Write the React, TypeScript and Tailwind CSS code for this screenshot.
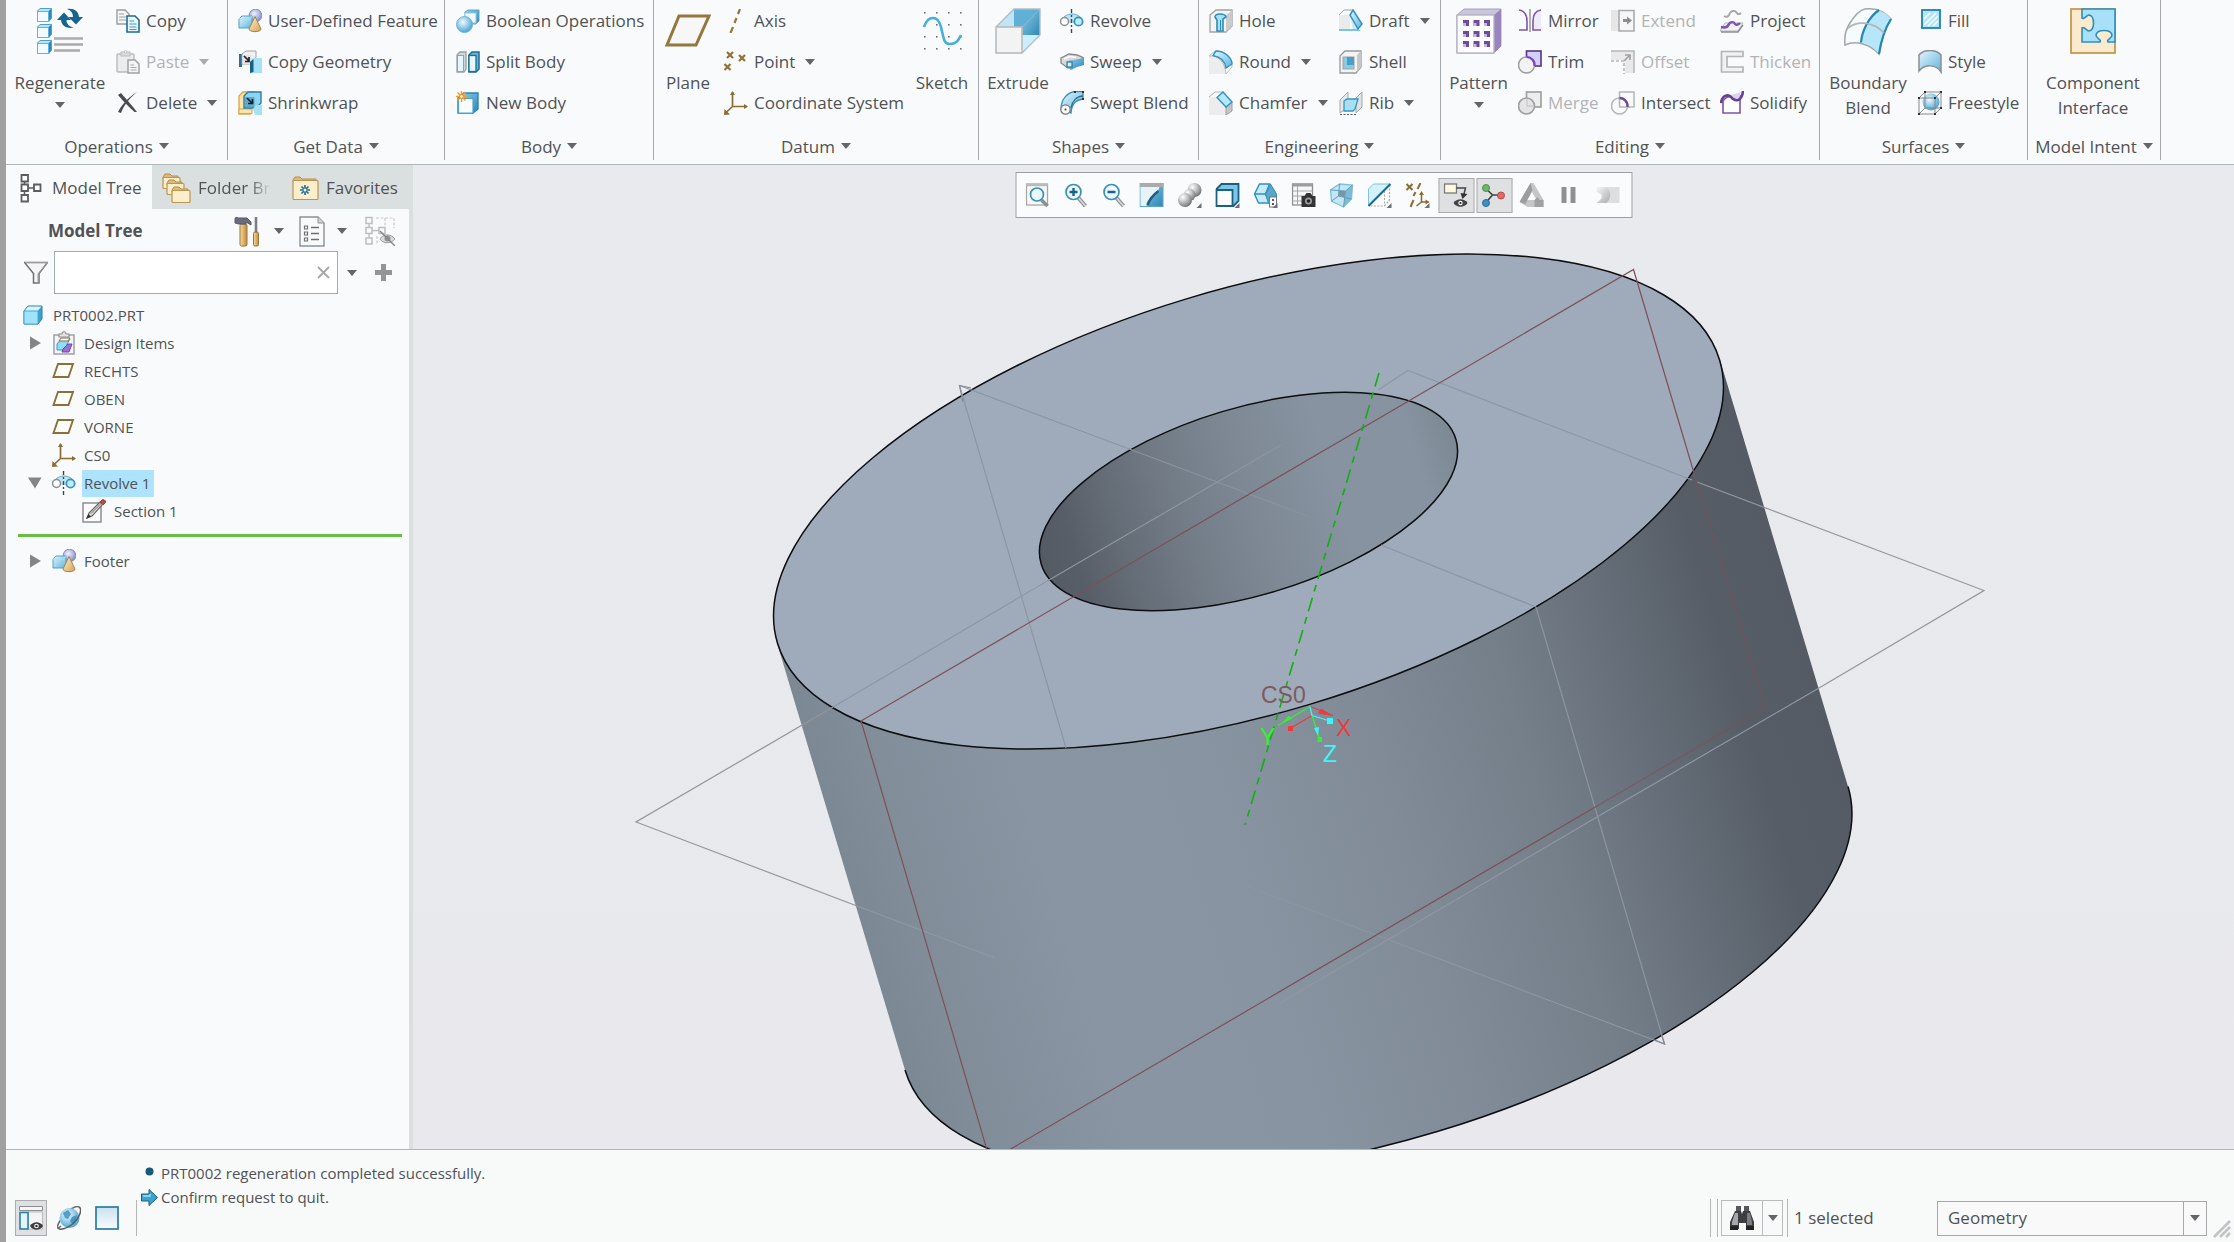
import React from "react";

type Kids = { children?: React.ReactNode };

function Svg({ s = 24, vb, children }: Kids & { s?: number; vb?: string }) {
  return (
    <svg width={s} height={s} viewBox={vb ?? `0 0 ${s} ${s}`} fill="none" className="shrink-0" aria-hidden="true">
      {children}
    </svg>
  );
}

function Caret({ light = false }: { light?: boolean }) {
  return (
    <svg width="10" height="6" viewBox="0 0 10 6" className="shrink-0" aria-hidden="true">
      <path d="M0 0H10L5 6Z" fill={light ? "#a9abac" : "#636568"} />
    </svg>
  );
}

function SharedGradients() {
  return (
    <svg width="0" height="0" className="absolute" aria-hidden="true">
      <defs>
        <linearGradient id="blue" x1="0" y1="0" x2="1" y2="1">
          <stop offset="0" stopColor="#e4f6fd" />
          <stop offset="1" stopColor="#5fb4dc" />
        </linearGradient>
        <linearGradient id="deep" x1="0" y1="0" x2="1" y2="1">
          <stop offset="0" stopColor="#8fd0ec" />
          <stop offset="1" stopColor="#2f86b4" />
        </linearGradient>
        <linearGradient id="tan" x1="0" y1="0" x2="1" y2="1">
          <stop offset="0" stopColor="#fff3d3" />
          <stop offset="1" stopColor="#d3a354" />
        </linearGradient>
        <linearGradient id="grey" x1="0" y1="0" x2="1" y2="1">
          <stop offset="0" stopColor="#f7f7f7" />
          <stop offset="1" stopColor="#a9abad" />
        </linearGradient>
        <radialGradient id="violet" cx="0.4" cy="0.35" r="0.7">
          <stop offset="0" stopColor="#f1f1fd" />
          <stop offset="1" stopColor="#8087c8" />
        </radialGradient>
        <radialGradient id="ball" cx="0.4" cy="0.35" r="0.7">
          <stop offset="0" stopColor="#eefaff" />
          <stop offset="1" stopColor="#3f9fd0" />
        </radialGradient>
        <radialGradient id="steel" cx="0.35" cy="0.3" r="0.75">
          <stop offset="0" stopColor="#ffffff" />
          <stop offset="0.5" stopColor="#b9bbbc" />
          <stop offset="1" stopColor="#6d6f71" />
        </radialGradient>
        <linearGradient id="wood" x1="0" y1="0" x2="1" y2="0">
          <stop offset="0" stopColor="#f6dca4" />
          <stop offset="1" stopColor="#c08a3c" />
        </linearGradient>
        <linearGradient id="pane" x1="0" y1="0" x2="0" y2="1">
          <stop offset="0" stopColor="#c9e2ef" />
          <stop offset="1" stopColor="#fafcfd" />
        </linearGradient>
      </defs>
    </svg>
  );
}

/* ---------- ribbon icons, 24px ---------- */

const CopyIcon = () => (
  <Svg>
    <path d="M1 1H9L13 5V15H1Z" fill="#f6f6f6" stroke="#9b9d9e" strokeWidth="1.4" />
    <path d="M3 5H8M3 8H10M3 11H10" stroke="#9b9d9e" strokeWidth="1.2" />
    <path d="M11 7H19L23 11V23H11Z" fill="#eaf7fd" stroke="#1d6d94" strokeWidth="1.6" />
    <path d="M13.500 12H18M13.500 15H20.500M13.500 18H20.500M13.500 20.500H20.500" stroke="#3a9bc8" strokeWidth="1.2" />
  </Svg>
);
const PasteIcon = () => (
  <Svg>
    <rect x="1" y="4" width="17" height="18" rx="1" fill="#ececec" stroke="#b9bbbc" strokeWidth="1.4" />
    <rect x="5" y="2" width="9" height="4" fill="#dcdcdc" stroke="#b9bbbc" />
    <circle cx="9.500" cy="1.800" r="1.300" fill="#fff" stroke="#b9bbbc" />
    <path d="M12 10H19L23 14V23H12Z" fill="#f4f4f4" stroke="#9fa1a2" strokeWidth="1.5" />
    <path d="M14.500 15H18M14.500 17.500H20.500M14.500 20H20.500" stroke="#a8aaab" strokeWidth="1.1" />
  </Svg>
);
const DeleteIcon = () => (
  <Svg>
    <path d="M2 4L5 2C9 7 16 14 21 21L18.500 21C14 17 7 10 2 4Z" fill="#4a4c4f" />
    <path d="M21 1C16 5 8 13 5 22L2 21C6 13 14 5 21 1Z" fill="#4a4c4f" />
  </Svg>
);
const SolidsIcon = () => (
  <Svg>
    <circle cx="17.500" cy="6.500" r="6.300" fill="url(#violet)" stroke="#8389c4" />
    <path d="M1 10L4 7H14V19H1Z" fill="url(#blue)" stroke="#4ba3cf" />
    <path d="M1 10H12L14 7" stroke="#a8e0f5" />
    <path d="M17 7.500L23 20C23 23.500 11 23.500 11 20Z" fill="url(#tan)" stroke="#a98347" />
  </Svg>
);
const CopyGeomIcon = () => (
  <Svg>
    <path d="M1 4H4V17H1Z" fill="#2f6f8f" />
    <path d="M4 4L8 1H18V7L14 14H4Z" fill="#f1f1f1" stroke="#a0a2a3" />
    <rect x="4.500" y="5" width="9" height="9" fill="#e2e4e5" />
    <path d="M6 6L11 11M11 7V11.500H7" stroke="#222" strokeWidth="1.700" />
    <path d="M12 12L15 8H24V23H15L12 24Z" fill="#a5e2f8" />
    <path d="M12 12L15.500 9V22L12 23Z" fill="#1d5f80" />
  </Svg>
);
const ShrinkwrapIcon = () => (
  <Svg>
    <path d="M1 5L5 1H16L12 6V23H1Z" fill="#fbe3ab" stroke="#d5a84e" strokeWidth="1.300" />
    <path d="M1 18H14V22.500H1Z" fill="#fbe3ab" stroke="#d5a84e" />
    <path d="M6 5L10 1H23V12L18 17H6Z" fill="#8ed3f0" stroke="#2b7da6" strokeWidth="1.400" />
    <rect x="7" y="6" width="9.500" height="10" fill="#5fa9c9" />
    <path d="M9 7L14 12M14.500 8V12.500H10" stroke="#123" strokeWidth="1.700" />
    <path d="M15 18L18 14H24V24H17Z" fill="#a5e2f8" />
  </Svg>
);
const BooleanIcon = () => (
  <Svg>
    <path d="M9 3L12 1H23V12L20 15H9Z" fill="url(#deep)" stroke="#57a9ce" />
    <rect x="9" y="4" width="11" height="10" fill="#eef7fb" stroke="#9cc9de" />
    <circle cx="8.500" cy="15.500" r="8" fill="url(#ball)" stroke="#6fb4d3" />
  </Svg>
);
const SplitIcon = () => (
  <Svg>
    <path d="M1 5L4 2H10V19L8 22H1Z" fill="#cfd8dc" stroke="#97a1a6" strokeWidth="1.300" />
    <rect x="1.500" y="5.500" width="6" height="16" fill="#e4f5fb" stroke="#97a1a6" />
    <path d="M13 5L16 2H23V19L20 22H13Z" fill="#63b5dc" stroke="#1d6d94" strokeWidth="1.500" />
    <rect x="13" y="5.500" width="7" height="16" fill="#e9f8fe" stroke="#1d6d94" strokeWidth="1.300" />
  </Svg>
);
const NewBodyIcon = () => (
  <Svg>
    <path d="M2 7L8 2H22V18L17 22H2Z" fill="url(#deep)" stroke="#2b86b4" strokeWidth="1.400" />
    <path d="M2.500 7.500H17V22H2.500Z" fill="#fafdff" stroke="#4aa3cd" strokeWidth="1.200" />
    <path d="M5.500 0V11M0 5.500H11M1.500 1.500L9.500 9.500M9.500 1.500L1.500 9.500" stroke="#f0a02c" strokeWidth="1.500" />
    <circle cx="5.500" cy="5.500" r="2" fill="#fff3c4" stroke="#e8891a" />
  </Svg>
);
const AxisIcon = () => (
  <Svg>
    <path d="M16 0L14 5M12.500 9L10.500 14M9 18L6.500 24" stroke="#93763a" strokeWidth="2.200" />
  </Svg>
);
const PointIcon = () => (
  <Svg>
    <path d="M3 2L9 8M9 2L3 8M15 5L21 11M21 5L15 11M0.500 14L6.500 20M6.500 14L0.500 20" stroke="#8f7234" strokeWidth="2.200" />
  </Svg>
);
const CsysIcon = () => (
  <Svg>
    <path d="M8.500 1V15.500H23M8.500 15.500L1 22.500" stroke="#8a6d33" strokeWidth="1.700" />
    <path d="M8.500 0L11 4H6ZM24 15.500L20 13V18ZM0 24L0.500 18L6 23.500Z" fill="#8a6d33" />
  </Svg>
);
const RevolveIcon = () => (
  <Svg>
    <path d="M3 9C6 3 18 3 21 9V14H3Z" fill="#bfe3f2" />
    <path d="M4 8C8 4 16 4 20 8" stroke="#6bb2d3" />
    <circle cx="4.500" cy="12.500" r="4" fill="#fff" stroke="#8c8e90" strokeWidth="1.500" />
    <circle cx="18.500" cy="12.500" r="4.200" fill="#bfeafb" stroke="#2f94c2" strokeWidth="1.700" />
    <path d="M11.500 0V24" stroke="#444" strokeWidth="1.400" strokeDasharray="4 2 2 2" />
  </Svg>
);
const SweepIcon = () => (
  <Svg>
    <path d="M1 8L9 4L17 5L24 8L15 12L10 11L8 18L1 13Z" fill="#d8dadb" stroke="#858789" strokeWidth="1.300" />
    <path d="M7 12L13 10L24 8V15L17 17L11 20L7 17Z" fill="url(#deep)" />
    <rect x="7" y="12" width="5" height="5" fill="#d8f2fc" stroke="#2b7da6" strokeWidth="1.300" />
    <path d="M4 9L10 6.500L16 7.500" stroke="#fff" strokeWidth="1.400" />
  </Svg>
);
const SweptBlendIcon = () => (
  <Svg>
    <path d="M1 18C1 8 8 1 15 0.500H23V8C16 9 12 12 11 22Z" fill="url(#blue)" stroke="#3a8db5" strokeWidth="1.300" />
    <path d="M11 17C12 10 17 5 23 5" stroke="#2c6f93" strokeWidth="1.300" />
    <circle cx="5.500" cy="18.500" r="4.700" fill="#fafafa" stroke="#77797b" strokeWidth="1.300" />
    <circle cx="5.500" cy="18.500" r="1" fill="#444" />
    <path d="M14 0H16V2H14ZM22 0H24V2H22ZM22 7H24V9H22Z" fill="#333" />
  </Svg>
);
const HoleIcon = () => (
  <Svg>
    <path d="M1 6L7 1H23V17L17 23H1Z" fill="#f3f3f3" stroke="#a0a2a3" strokeWidth="1.300" />
    <path d="M17 7L23 1V17L17 23Z" fill="#c9cbcc" />
    <path d="M6 8C6 4 16 4 17 8L14 10V22H8V11Z" fill="#a9e0f6" stroke="#2c8dbb" strokeWidth="1.600" />
    <path d="M11.500 11V21" stroke="#2c8dbb" />
  </Svg>
);
const RoundIcon = () => (
  <Svg>
    <path d="M0 6C9 5 16 12 17 24H0Z" fill="#ededed" />
    <path d="M0 6L6 1C16 1 23 8 23 17L17 24C16 12 9 5 0 6Z" fill="#fff" stroke="#b9bbbc" />
    <path d="M7 1C16 1 23 8 23 14L17 18C16 11 12 7 4 5.500Z" fill="url(#blue)" stroke="#2f94c2" strokeWidth="1.400" />
  </Svg>
);
const ChamferIcon = () => (
  <Svg>
    <path d="M0 6H8L17 15V24H0Z" fill="#ededed" />
    <path d="M0 6L6 1H14" stroke="#b0b2b3" />
    <path d="M23 11V20L17 24V16Z" fill="#c4c6c7" stroke="#9c9e9f" />
    <path d="M14 1L23 11L17 16L8 6.500Z" fill="#b5e6f9" stroke="#2f94c2" strokeWidth="1.400" />
  </Svg>
);
const DraftIcon = () => (
  <Svg>
    <path d="M0 6H11V20H0Z" fill="#e9ebec" />
    <path d="M0 6L5 1H14L11 6" stroke="#a0a2a3" />
    <path d="M0 20H19L22 22H0Z" fill="#79c3e4" />
    <path d="M11 7L14 20H19Z" fill="#cde9f5" />
    <path d="M14 1L23 15L19 20L11 6Z" fill="url(#blue)" stroke="#2f94c2" strokeWidth="1.500" />
  </Svg>
);
const ShellIcon = () => (
  <Svg>
    <path d="M1 6L6 1H22V17L17 23H1Z" fill="#f3f3f3" stroke="#97999a" strokeWidth="1.300" />
    <path d="M18 5L22 1V17L18 22Z" fill="#c4c6c7" />
    <rect x="4" y="7" width="11" height="12" fill="#8cc9e4" stroke="#a0a2a3" />
    <path d="M8 7H15V15H8Z" fill="#4a9fc4" />
  </Svg>
);
const RibIcon = () => (
  <Svg>
    <path d="M1 9L9 1V16L1 22Z" fill="#e6e8e9" stroke="#a5a7a8" />
    <path d="M17 7L23 1V16L17 22Z" fill="#dfe1e2" stroke="#a5a7a8" />
    <path d="M5 10L8 8H19L16 18L14 20H5Z" fill="#a9def3" stroke="#3196c4" strokeWidth="1.300" />
    <path d="M1 23.500H17" stroke="#555" strokeDasharray="2 1.500" />
  </Svg>
);
const MirrorIcon = () => (
  <Svg>
    <path d="M1 1C7 2 9 6 9 12V21H1" stroke="#7d56a8" strokeWidth="1.600" />
    <path d="M23 1C17 2 15 6 15 12V21H23" fill="#efeaf7" stroke="#7d56a8" strokeWidth="1.600" />
    <path d="M12 0V23" stroke="#8c8e90" strokeWidth="1.400" />
  </Svg>
);
const TrimIcon = () => (
  <Svg>
    <rect x="8.500" y="1" width="14.500" height="15" fill="#d5cdfa" stroke="#5c3f86" strokeWidth="1.700" />
    <circle cx="8.500" cy="15" r="8" fill="#f3f3f3" stroke="#9b9d9e" strokeWidth="1.500" />
    <path d="M8.500 7A8 8 0 0 1 16.500 16" stroke="#7a3fd0" strokeWidth="2.200" />
  </Svg>
);
const MergeIcon = () => (
  <Svg>
    <rect x="8.500" y="1" width="14.500" height="15" fill="#ededed" stroke="#9fa1a2" strokeWidth="1.700" />
    <circle cx="8.500" cy="15" r="8" fill="#e4e4e4" stroke="#9fa1a2" strokeWidth="1.700" />
    <path d="M9 8V15H16" stroke="#c9cbcc" strokeWidth="1.300" />
  </Svg>
);
const IntersectIcon = () => (
  <Svg>
    <rect x="8.500" y="1" width="14.500" height="15" stroke="#b3b5b6" strokeWidth="1.500" />
    <circle cx="8.500" cy="15" r="8" stroke="#b3b5b6" strokeWidth="1.500" />
    <path d="M8.500 7A8 8 0 0 1 16.500 16" stroke="#6a4a94" strokeWidth="2.400" />
  </Svg>
);
const ExtendIcon = () => (
  <Svg>
    <rect x="0" y="1" width="9" height="21" fill="#e6e6e6" />
    <path d="M8 1.500H23V22H8Z" fill="#f6f6f6" stroke="#a9abac" strokeWidth="1.600" />
    <path d="M12 10H16V7.500L21 11.500L16 15.500V13H12Z" fill="#8b8d8f" />
  </Svg>
);
const OffsetIcon = () => (
  <Svg>
    <path d="M0 1H23V23H14V10H0Z" fill="#e9e9e9" />
    <path d="M0 1H23V23" stroke="#b3b5b6" strokeWidth="1.500" />
    <path d="M0 11H13V24" stroke="#b3b5b6" strokeWidth="1.500" strokeDasharray="3 2" />
    <path d="M13 11L18 6M14 5H19V10" stroke="#9b9d9e" strokeWidth="1.500" />
  </Svg>
);
const ProjectIcon = () => (
  <Svg>
    <path d="M4 7C7 9 9 7 10 4C12 1 15 1 17 4C18 6 20 5 21 4" stroke="#a5a7a8" strokeWidth="2" />
    <path d="M5 14H23L18 22H0Z" fill="#f3f3f3" stroke="#b3b5b6" />
    <path d="M1 18C5 19 8 18 9 15C11 12 14 13 15 15C17 17 19 15 20 14" stroke="#7b52b5" strokeWidth="2.400" />
    <path d="M1 23H18L23 16" stroke="#8c8e90" strokeWidth="1.300" />
  </Svg>
);
const ThickenIcon = () => (
  <Svg>
    <path d="M1.500 1.500H23V6.500H7V17H23V22H1.500Z" fill="#f1f1f1" stroke="#b3b5b6" strokeWidth="1.700" />
  </Svg>
);
const SolidifyIcon = () => (
  <Svg>
    <path d="M3 10C8 3 12 6 14 8C17 11 20 8 20 4V22H3Z" fill="#fff" stroke="#7d56a8" strokeWidth="1.600" />
    <path d="M8 5L21 1L19 8L14 9Z" fill="#ddd2f3" />
    <path d="M1 12C2 4 8 3 11 6C15 11 22 11 23 0" stroke="#66418f" strokeWidth="2.600" />
  </Svg>
);
const FillIcon = () => (
  <Svg>
    <rect x="4" y="1" width="18" height="18" fill="#b2e6fa" stroke="#1f7fae" strokeWidth="1.800" />
    <path d="M6 10L12 4M6 16L18 4M10 17L20 7M15 17L20 12" stroke="#fff" strokeWidth="1.400" />
  </Svg>
);
const StyleIcon = () => (
  <Svg>
    <path d="M1 5C6 -1 18 -1 23 5V22C18 14 7 14 1 21Z" fill="url(#blue)" stroke="#8c8e90" strokeWidth="1.500" />
  </Svg>
);
const FreestyleIcon = () => (
  <Svg>
    <circle cx="13" cy="11" r="8.500" fill="url(#ball)" />
    <path d="M1 7L7 1H23V17L17 23H1ZM1 7H17V23M17 7L23 1M7 1V17H23M7 17L1 23" stroke="#85878a" strokeWidth="1" />
    <path d="M0 6H2V8H0ZM6 0H8V2H6ZM22 0H24V2H22ZM0 22H2V24H0ZM16 22H18V24H16ZM22 16H24V18H22ZM16 6H18V8H16Z" fill="#333" />
  </Svg>
);

/* ---------- large ribbon icons, 46px ---------- */

function MiniCube({ y }: { y: number }) {
  return (
    <g transform={`translate(0 ${y})`}>
      <path d="M0.500 3L3 0.500H14.500V10L12 13.500H0.500Z" fill="#2f86b4" stroke="#4ba3cf" />
      <path d="M0.500 3.500H11.500V13.500H0.500Z" fill="#f2fbff" stroke="#5fb4dc" />
      <path d="M1 3L3 1H14L11.500 3Z" fill="#b8e6f8" />
    </g>
  );
}
const RegenerateIcon = () => (
  <Svg s={46}>
    <MiniCube y={0} />
    <MiniCube y={16} />
    <MiniCube y={32} />
    <path d="M30 1C37 0 41.500 3 42 9H46L39 16.500L31.500 9H36C36 5 34 2.500 30 1Z" fill="#15668f" />
    <path d="M36.500 19.500C30 21 24.500 18 24 12H20L27 4.500L34 12H29.500C29.500 16 32 18.500 36.500 19.500Z" fill="#15668f" />
    <path d="M17 30.500H46M17 36.500H46M17 42.500H43" stroke="#a9abac" strokeWidth="2.600" />
  </Svg>
);
const BigPlaneIcon = () => (
  <Svg s={46}>
    <path d="M14 8H44L31 37H2Z" fill="#f7f7f7" stroke="#93773f" strokeWidth="3" />
  </Svg>
);
const SketchIcon = () => (
  <Svg s={46}>
    {[4, 16, 28, 40].map((y) =>
      [5, 17, 29, 41].map((x) => <rect key={`${x}-${y}`} x={x} y={y} width="1.600" height="1.600" fill="#6d6f71" />)
    )}
    <path d="M5 19C9 7 19 7 22 19C25 32 25 36 31 36C38 36 40 31 42 27" stroke="#46aede" strokeWidth="2.600" />
  </Svg>
);
const ExtrudeIcon = () => (
  <Svg s={46}>
    <path d="M1 19L19 1H45L27 19Z" fill="#5fb0d4" />
    <path d="M1 19L19 1V19Z" fill="#bfe6f6" />
    <path d="M27 19L45 1V27L27 45Z" fill="#6cb6d8" />
    <path d="M27 19L45 1V27H27Z" fill="url(#deep)" />
    <path d="M27 27H45L27 45Z" fill="#cdeefb" />
    <path d="M1 19L19 1H45V27L27 45" stroke="#b0bfc6" strokeWidth="1.400" />
    <rect x="1" y="19" width="26" height="26" fill="#f3f3f3" stroke="#b9bbbc" strokeWidth="1.600" />
  </Svg>
);
const PatternIcon = () => (
  <Svg s={46}>
    <path d="M1 7L8 1H45V38L38 45H1Z" fill="#c9c5dc" stroke="#a6a3b4" />
    <path d="M38 7L45 1V38L38 45Z" fill="#9a84bd" />
    <rect x="1" y="7" width="37" height="38" fill="#fdfdfe" stroke="#b3b0c0" strokeWidth="1.300" />
    {[12, 23, 33].map((y) =>
      [7, 17.500, 28].map((x) => (
        <g key={`${x}-${y}`}>
          <rect x={x} y={y} width="6" height="6" fill="#6d4a9c" />
          <rect x={x} y={y + 3} width="3" height="3" fill="#c5b6dc" />
        </g>
      ))
    )}
  </Svg>
);
const BoundaryIcon = () => (
  <Svg s={48}>
    <path d="M6 15C11 7 16 2 21 1C30 0 40 3 47 11C40 22 37 33 35 46C26 36 12 32 1 37C0 29 2 21 6 15Z" fill="#f6fbfd" stroke="#a5a7a8" strokeWidth="1.600" />
    <path d="M35 2.500C40 4 44 7 47 11C40 22 37 33 35 46C30 40 24 36 17 34.500C18 22 25 9 35 2.500Z" fill="#b5e6f9" />
    <path d="M35 2C25 9 18 22 17 34.500M47 11C40 22 37 33 35 46" stroke="#2385b3" strokeWidth="2.200" />
    <path d="M4 20C14 12 30 14 40 25" stroke="#b3b5b6" strokeWidth="1.800" />
  </Svg>
);
const ComponentIcon = () => (
  <Svg s={46}>
    <rect x="1" y="1" width="44" height="44" fill="#fbeace" stroke="#c59a4e" strokeWidth="1.800" />
    <path d="M12 1H45V34H38C36 31 42 31 42 27C41 21 27 21 26 27C26 31 32 31 30 34H12V20C15 18 16 23 19 23C25 22 25 8 19 7C16 7 15 12 12 10Z" fill="#a8e1f7" stroke="#2f8fbb" strokeWidth="1.600" />
  </Svg>
);

/* ---------- ribbon building blocks ---------- */

function Tool({ icon, label, caret = false, off = false }: { icon: React.ReactNode; label: string; caret?: boolean; off?: boolean }) {
  return (
    <button type="button" disabled={off} className={`flex h-[41px] items-center gap-1.5 whitespace-nowrap ${off ? "text-[#b1b3b5]" : "text-[#505255]"}`}>
      {icon}
      <span>{label}</span>
      {caret && (
        <span className="ml-1">
          <Caret light={off} />
        </span>
      )}
    </button>
  );
}

function BigTool({ icon, lines, caret = false, w }: { icon: React.ReactNode; lines: string[]; caret?: boolean; w: string }) {
  return (
    <button type="button" className={`flex shrink-0 flex-col items-center self-start pt-2 leading-[25px] ${w}`}>
      <span className="flex h-[46px] items-start">{icon}</span>
      <span className="mt-4 flex flex-col items-center">
        {lines.map((l) => (
          <span key={l}>{l}</span>
        ))}
        {caret && (
          <span className="flex h-5 items-center">
            <Caret />
          </span>
        )}
      </span>
    </button>
  );
}

function Col({ w = "", children }: Kids & { w?: string }) {
  return <div className={`flex shrink-0 flex-col items-start ${w}`}>{children}</div>;
}

function Group({ name, w, children }: Kids & { name: string; w: string }) {
  return (
    <section aria-label={name} className={`flex shrink-0 flex-col border-r border-[#a5a9ab] ${w}`}>
      <div className="flex h-[123px]">{children}</div>
      <button type="button" className="flex h-[37px] items-center justify-center gap-1.5 whitespace-nowrap pt-2.5">
        {name}
        <span className="flex pb-0.5">
          <Caret />
        </span>
      </button>
    </section>
  );
}

function Ribbon() {
  return (
    <header className="flex h-[165px] shrink-0 border-b border-[#afb8b9] bg-[#f9fafc] pb-1 text-[17px] text-[#505255]">
      <Group name="Operations" w="w-[222px]">
        <BigTool w="w-[108px]" icon={<RegenerateIcon />} lines={["Regenerate"]} caret />
        <Col w="pl-0.5">
          <Tool icon={<CopyIcon />} label="Copy" />
          <Tool icon={<PasteIcon />} label="Paste" caret off />
          <Tool icon={<DeleteIcon />} label="Delete" caret />
        </Col>
      </Group>
      <Group name="Get Data" w="w-[217px]">
        <Col w="pl-2.5">
          <Tool icon={<SolidsIcon />} label="User-Defined Feature" />
          <Tool icon={<CopyGeomIcon />} label="Copy Geometry" />
          <Tool icon={<ShrinkwrapIcon />} label="Shrinkwrap" />
        </Col>
      </Group>
      <Group name="Body" w="w-[209px]">
        <Col w="pl-[11px]">
          <Tool icon={<BooleanIcon />} label="Boolean Operations" />
          <Tool icon={<SplitIcon />} label="Split Body" />
          <Tool icon={<NewBodyIcon />} label="New Body" />
        </Col>
      </Group>
      <Group name="Datum" w="w-[325px]">
        <BigTool w="w-[68px]" icon={<BigPlaneIcon />} lines={["Plane"]} />
        <Col w="w-[184px] pl-0.5">
          <Tool icon={<AxisIcon />} label="Axis" />
          <Tool icon={<PointIcon />} label="Point" caret />
          <Tool icon={<CsysIcon />} label="Coordinate System" />
        </Col>
        <BigTool w="w-[72px]" icon={<SketchIcon />} lines={["Sketch"]} />
      </Group>
      <Group name="Shapes" w="w-[220px]">
        <BigTool w="w-[78px]" icon={<ExtrudeIcon />} lines={["Extrude"]} />
        <Col w="pl-[3px]">
          <Tool icon={<RevolveIcon />} label="Revolve" />
          <Tool icon={<SweepIcon />} label="Sweep" caret />
          <Tool icon={<SweptBlendIcon />} label="Swept Blend" />
        </Col>
      </Group>
      <Group name="Engineering" w="w-[242px]">
        <Col w="w-[140px] pl-2.5">
          <Tool icon={<HoleIcon />} label="Hole" />
          <Tool icon={<RoundIcon />} label="Round" caret />
          <Tool icon={<ChamferIcon />} label="Chamfer" caret />
        </Col>
        <Col>
          <Tool icon={<DraftIcon />} label="Draft" caret />
          <Tool icon={<ShellIcon />} label="Shell" />
          <Tool icon={<RibIcon />} label="Rib" caret />
        </Col>
      </Group>
      <Group name="Editing" w="w-[379px]">
        <BigTool w="w-[75px]" icon={<PatternIcon />} lines={["Pattern"]} caret />
        <Col w="w-[95px] pl-0.5">
          <Tool icon={<MirrorIcon />} label="Mirror" />
          <Tool icon={<TrimIcon />} label="Trim" />
          <Tool icon={<MergeIcon />} label="Merge" off />
        </Col>
        <Col w="w-[109px]">
          <Tool icon={<ExtendIcon />} label="Extend" off />
          <Tool icon={<OffsetIcon />} label="Offset" off />
          <Tool icon={<IntersectIcon />} label="Intersect" />
        </Col>
        <Col>
          <Tool icon={<ProjectIcon />} label="Project" />
          <Tool icon={<ThickenIcon />} label="Thicken" off />
          <Tool icon={<SolidifyIcon />} label="Solidify" />
        </Col>
      </Group>
      <Group name="Surfaces" w="w-[208px]">
        <BigTool w="w-[96px]" icon={<BoundaryIcon />} lines={["Boundary", "Blend"]} />
        <Col w="pl-0.5">
          <Tool icon={<FillIcon />} label="Fill" />
          <Tool icon={<StyleIcon />} label="Style" />
          <Tool icon={<FreestyleIcon />} label="Freestyle" />
        </Col>
      </Group>
      <Group name="Model Intent" w="w-[133px]">
        <BigTool w="w-[130px]" icon={<ComponentIcon />} lines={["Component", "Interface"]} />
      </Group>
    </header>
  );
}

/* ---------- model tree panel ---------- */

const TreeTabIcon = () => (
  <svg width="22" height="30" viewBox="0 0 22 30" fill="none" className="shrink-0" aria-hidden="true">
    <path d="M4.500 8V22M8 15H14" stroke="#5b5d60" strokeWidth="1.500" />
    <path d="M1.500 2H8V8.500H1.500ZM1.500 11.500H8V18H1.500ZM1.500 22H8V28.500H1.500ZM14 11.500H20.500V18H14Z" fill="#fff" stroke="#5b5d60" strokeWidth="1.800" />
  </svg>
);

function Folder({ x, y, w = 17, h = 13 }: { x: number; y: number; w?: number; h?: number }) {
  return (
    <g transform={`translate(${x} ${y})`}>
      <path d={`M0 3L2 0H7L9 2H${w - 2}V5H0Z`} fill="#d9bb80" stroke="#b58f4c" />
      <rect x="0" y="3.500" width={w} height={h - 2} rx="1" fill="#fdeecb" stroke="#bb9450" strokeWidth="1.200" />
    </g>
  );
}
const FoldersIcon = () => (
  <Svg s={30}>
    <Folder x={1} y={1} />
    <Folder x={5} y={7} />
    <Folder x={10} y={14} w={18} h={14} />
  </Svg>
);
const FavoritesIcon = () => (
  <Svg s={27}>
    <Folder x={1} y={2} w={25} h={21} />
    <path d="M13 10V20M8 15H18M9.500 11.500L16.500 18.500M16.500 11.500L9.500 18.500" stroke="#1b6a92" strokeWidth="1.600" />
    <circle cx="13" cy="15" r="1.500" fill="#fff" />
  </Svg>
);
const ToolsIcon = () => (
  <svg width="26" height="31" viewBox="0 0 26 31" fill="none" className="shrink-0" aria-hidden="true">
    <rect x="6" y="8" width="7" height="22" rx="1.500" fill="url(#wood)" stroke="#9d7432" />
    <path d="M1 3C1 1 3 1 4 2H13L17 6V9L12 6V8H5L1 7Z" fill="#6a6c7c" stroke="#55586a" />
    <path d="M22 1V16" stroke="#7b7d8c" strokeWidth="2.600" />
    <rect x="19.500" y="16" width="5" height="14" rx="1.500" fill="url(#wood)" stroke="#9d7432" />
  </svg>
);
const ListIcon = () => (
  <svg width="26" height="31" viewBox="0 0 26 31" fill="none" className="shrink-0" aria-hidden="true">
    <path d="M1 1H19L25 7V30H1Z" fill="#f8fafb" stroke="#8c9194" strokeWidth="1.400" />
    <path d="M19 1V7H25" fill="#cfd3d5" stroke="#8c9194" />
    <path d="M12 11.500H20M12 17.500H20M12 23.500H20" stroke="#6d6f71" strokeWidth="1.400" />
    <path d="M5.500 10H8.500V13H5.500ZM5.500 16H8.500V19H5.500ZM5.500 22H8.500V25H5.500Z" stroke="#6d6f71" strokeWidth="1.200" />
  </svg>
);
const HiddenTreeIcon = () => (
  <Svg s={30}>
    <path d="M1 1.500H7V7.500H1ZM1 11.500H7V17.500H1ZM1 22H7V28H1ZM14 11.500H20V17.500H14Z" stroke="#bcbebf" strokeWidth="1.500" />
    <path d="M4 8V11M4 18V22M7 14.500H14" stroke="#bcbebf" strokeWidth="1.300" />
    <path d="M11 2H29V12M20 2V10M12 20V28" stroke="#c9cbcc" strokeWidth="1.200" strokeDasharray="3 1.500" />
    <path d="M15 23C18 17.500 26 17.500 30 23C26 28 18 28 15 23Z" fill="#d9dadb" stroke="#9b9d9e" />
    <circle cx="22.500" cy="22.500" r="3" fill="#8f9192" />
    <path d="M15 15L30 30" stroke="#85878a" strokeWidth="1.500" />
  </Svg>
);
const FunnelIcon = () => (
  <Svg>
    <path d="M0.500 1.500H23.500L15 12.500V22H9.500V12.500Z" fill="#f5f5f5" stroke="#6d6f71" strokeWidth="1.500" />
    <path d="M1 1.500H23.500L14 13V22" stroke="#9b9d9e" />
  </Svg>
);
const PartIcon = () => (
  <Svg s={20}>
    <path d="M1 6L5 1H19V14L15 19H1Z" fill="#3f9fce" stroke="#2d7fa8" />
    <path d="M1 6H15V19H1Z" fill="#9fe3fb" stroke="#4ba9d3" />
    <path d="M2 5.500L5 1.500H18.500L15 5.500Z" fill="#d8f4fd" />
  </Svg>
);
const DesignIcon = () => (
  <Svg>
    <rect x="2" y="4" width="20" height="19" fill="#f5f5f7" stroke="#9fa1a8" strokeWidth="1.500" />
    <path d="M7 6V3H10C10 0 14 0 14 3H17V6Z" fill="#e4e5e7" stroke="#8f9196" strokeWidth="1.100" />
    <path d="M5 13L9 8H18L15 13V19H5Z" fill="#8fdcf8" stroke="#3a9bc8" />
    <path d="M7 10L9 7H18L16 10Z" fill="#fff" stroke="#88714a" />
    <path d="M11 18L16 13H20L17 21H10Z" fill="#9a6fd0" stroke="#6c49a0" />
  </Svg>
);
const PlaneIcon = () => (
  <Svg>
    <path d="M6 5H21L16.500 18H1.500Z" fill="#fdfdfc" stroke="#8c7038" strokeWidth="1.900" />
  </Svg>
);
const SectionIcon = () => (
  <Svg>
    <rect x="1" y="4" width="18" height="19" fill="#fcfcfc" stroke="#8c8e90" strokeWidth="1.500" />
    <path d="M5 19L7 14L18 3L20.500 5.500L10 17Z" fill="#d9dadb" stroke="#5b5d60" strokeWidth="1.100" />
    <path d="M4 20L6.500 15L9 17.500Z" fill="#333" />
    <path d="M9 14.500L19 4.500" stroke="#8b6a4c" />
    <path d="M18 3L20 1C21.500 -0.500 25 2.500 23 4L21 6Z" fill="#b84a48" stroke="#9c3f3d" />
  </Svg>
);

function Expander({ open }: { open: boolean }) {
  return (
    <svg width="14" height="14" viewBox="0 0 14 14" className="shrink-0" aria-hidden="true">
      <path d={open ? "M0 1.500H13.500L7 12.500Z" : "M2 0.500L13 7L2 13.500Z"} fill="#838587" />
    </svg>
  );
}

function Node({ icon, label, expand, selected = false, indent = "" }: { icon: React.ReactNode; label: string; expand?: "open" | "closed"; selected?: boolean; indent?: string }) {
  return (
    <li className={`flex h-7 items-center ${indent}`}>
      <span className="flex w-6 shrink-0">{expand && <Expander open={expand === "open"} />}</span>
      {icon}
      <span className={`ml-1.5 flex h-[27px] items-center px-0.5 ${selected ? "bg-[#aee3fd] pr-1" : ""}`}>{label}</span>
    </li>
  );
}

function Panel() {
  return (
    <aside className="flex w-[407px] shrink-0 flex-col border-r-4 border-[#dae0e0] bg-[#f9fafb]">
      <div role="tablist" className="flex h-11 shrink-0 bg-[#dae0e0] text-[17px]">
        <button type="button" role="tab" aria-selected="true" className="flex w-[146px] shrink-0 items-center gap-2.5 whitespace-nowrap bg-[#f9fafb] pl-3.5 pt-0.5">
          <TreeTabIcon />
          Model Tree
        </button>
        <button type="button" role="tab" aria-selected="false" className="flex w-[130px] shrink-0 items-center gap-1.5 pl-2.5 pt-0.5">
          <FoldersIcon />
          <span className="whitespace-nowrap text-left [mask-image:linear-gradient(to_right,black_70%,transparent)]">Folder Br</span>
        </button>
        <button type="button" role="tab" aria-selected="false" className="flex items-center gap-[7px] whitespace-nowrap pl-2.5 pt-0.5">
          <FavoritesIcon />
          Favorites
        </button>
      </div>
      <div className="flex h-[42px] shrink-0 items-center pl-[42px] pr-3.5 pt-0.5">
        <h2 className="flex-1 text-[17px] font-bold">Model Tree</h2>
        <button type="button" aria-label="Settings" className="flex items-center gap-3.5 pr-[15px]">
          <ToolsIcon />
          <Caret />
        </button>
        <button type="button" aria-label="Show" className="flex items-center gap-3 pr-[18px]">
          <ListIcon />
          <Caret />
        </button>
        <button type="button" disabled aria-label="Tree filters">
          <HiddenTreeIcon />
        </button>
      </div>
      <div className="flex h-[43px] shrink-0 items-center pl-[18px] pr-[17px]">
        <FunnelIcon />
        <div className="ml-1.5 flex h-[43px] flex-1 items-center border border-[#a3abab] bg-white">
          <input type="text" aria-label="Filter the tree" className="h-full min-w-0 flex-1 bg-transparent px-2 text-[16px] outline-none" />
          <button type="button" aria-label="Clear" className="flex w-7 justify-center">
            <Svg s={13}>
              <path d="M1 1L12 12M12 1L1 12" stroke="#a5a7a8" strokeWidth="1.800" />
            </Svg>
          </button>
        </div>
        <button type="button" aria-label="Filter history" className="ml-[9px] mr-[18px]">
          <Caret />
        </button>
        <button type="button" aria-label="Add filter">
          <Svg s={17}>
            <path d="M8.500 0V17M0 8.500H17" stroke="#939596" strokeWidth="5" />
          </Svg>
        </button>
      </div>
      <ul className="mt-[7px] text-[15px] text-[#505255]">
        <li className="flex h-7 items-center gap-2.5 pl-[17px]">
          <PartIcon />
          PRT0002.PRT
        </li>
        <Node indent="pl-[22px]" expand="closed" icon={<DesignIcon />} label="Design Items" />
        <Node indent="pl-[22px]" icon={<PlaneIcon />} label="RECHTS" />
        <Node indent="pl-[22px]" icon={<PlaneIcon />} label="OBEN" />
        <Node indent="pl-[22px]" icon={<PlaneIcon />} label="VORNE" />
        <Node indent="pl-[22px]" icon={<CsysIcon />} label="CS0" />
        <Node indent="pl-[22px]" expand="open" selected icon={<RevolveIcon />} label="Revolve 1" />
        <Node indent="pl-[52px]" icon={<SectionIcon />} label="Section 1" />
        <li className="mb-2.5 ml-3 mr-[7px] mt-[9px] h-[3px] bg-[#68bd45]" />
        <Node indent="pl-[22px]" expand="closed" icon={<SolidsIcon />} label="Footer" />
      </ul>
    </aside>
  );
}

/* ---------- view toolbar ---------- */

const corner = <path d="M24 20V25H19Z" fill="#6d6f71" />;

function Lens({ sign }: { sign?: string }) {
  return (
    <>
      <path d="M15 15L22 23" stroke="#8c8e90" strokeWidth="4" />
      <path d="M15 15L22 23" stroke="#d9dbdc" strokeWidth="1.600" />
      <circle cx="10" cy="9" r="7.500" fill="#effaff" stroke="#3a8fb8" strokeWidth="1.700" />
      {sign && <path d={sign} stroke="#14658e" strokeWidth="2.400" />}
    </>
  );
}

const viewTools: { name: string; on?: boolean; art: React.ReactNode }[] = [
  {
    name: "Refit",
    art: (
      <>
        <rect x="1" y="1" width="21" height="21" fill="#f9f9f9" stroke="#a5a7a8" strokeWidth="1.300" />
        <path d="M1 2H22" stroke="#b9bbbc" strokeWidth="2.500" />
        <path d="M16 17L22 23" stroke="#8c8e90" strokeWidth="3.500" />
        <circle cx="11.500" cy="11.500" r="6.500" fill="#e9f8ff" stroke="#3a8fb8" strokeWidth="1.700" />
      </>
    ),
  },
  { name: "Zoom in", art: <Lens sign="M10 5V13M6 9H14" /> },
  { name: "Zoom out", art: <Lens sign="M6 9H14" /> },
  {
    name: "Repaint",
    art: (
      <>
        <rect x="0.500" y="0.500" width="23" height="23" fill="url(#deep)" stroke="#5aa5c8" />
        <path d="M1 4H20C18 12 9 15 7 23H1Z" fill="#e6f3f9" />
        <path d="M0 0H24V4H0Z" fill="#a9abac" />
        <path d="M19 8C15 11 10 16 8 22" stroke="#1c5f83" strokeWidth="2.600" />
      </>
    ),
  },
  {
    name: "Rendering options",
    art: (
      <>
        <circle cx="17" cy="7" r="7" fill="url(#steel)" />
        <circle cx="12" cy="12" r="6" fill="url(#steel)" />
        <circle cx="7.500" cy="17" r="7" fill="url(#steel)" />
        {corner}
      </>
    ),
  },
  {
    name: "Display style",
    art: (
      <>
        <path d="M1 6L6 1H23V18L18 23H1Z" fill="#7cc6e6" stroke="#1b5f83" strokeWidth="1.800" />
        <path d="M1 7H17V23H1Z" fill="#fafdff" stroke="#1b5f83" strokeWidth="1.800" />
        {corner}
      </>
    ),
  },
  {
    name: "Saved orientations",
    art: (
      <>
        <path d="M1 11L6 1H16L12 11L16 20H5Z" fill="#c6ecfa" stroke="#2f8fbb" strokeWidth="1.400" />
        <path d="M12 11L17 1L23 11V20H15Z" fill="#58a6c9" stroke="#2f8fbb" />
        <path d="M1 11H12" stroke="#2f8fbb" strokeWidth="1.400" />
        <rect x="16" y="14" width="7" height="10" fill="#fff" stroke="#77797b" />
        <path d="M19.500 16V18M19.500 20V22" stroke="#444" strokeWidth="1.800" />
        {corner}
      </>
    ),
  },
  {
    name: "View manager",
    art: (
      <>
        <rect x="1" y="1" width="20" height="21" fill="#f6f6f6" stroke="#8c8e90" strokeWidth="1.300" />
        <path d="M1 2H21" stroke="#9b9d9e" strokeWidth="3" />
        <path d="M6 3V22M1 8H21M1 13H21M1 18H12" stroke="#a5a7a8" />
        <path d="M10 13H13L15 10H19L21 13H24V24H10Z" fill="#333" />
        <circle cx="17" cy="18" r="3.500" fill="#9b9d9e" />
        <circle cx="17" cy="18" r="1.800" fill="#222" />
      </>
    ),
  },
  {
    name: "Perspective view",
    art: (
      <>
        <path d="M1 7L10 1L23 2L22 16L14 24L2 18Z" fill="#c3e6f4" stroke="#7fbfdb" strokeWidth="1.300" />
        <path d="M16 8L23 2L22 16L14 24Z" fill="#7dbad6" />
        <path d="M10 1L9 13L2 18M9 13L22 16M1 7L16 8L23 2M16 8L14 24" stroke="#5f9fbd" />
        <path d="M9.500 8H16L15 14.500L9 13Z" fill="#7a97a5" />
      </>
    ),
  },
  {
    name: "Section display",
    art: (
      <>
        <path d="M1 6L6 1H22L1 22Z" fill="#d3f1fc" stroke="#7fc3df" />
        <path d="M22 2V17L17 23H3" stroke="#a5a7a8" strokeWidth="1.200" strokeDasharray="2 1.500" />
        <path d="M17 8V23" stroke="#a5a7a8" strokeDasharray="2 1.500" />
        <path d="M23 1L1 23" stroke="#1b6a92" strokeWidth="2" />
        {corner}
      </>
    ),
  },
  {
    name: "Datum display filters",
    art: (
      <>
        <path d="M1 1L7 7M7 1L1 7M15 0L12 6M8 17L5 24M10 9L8 13" stroke="#8a6d33" strokeWidth="2" />
        <path d="M16 11V19H23M16 19L11 23" stroke="#8a6d33" strokeWidth="1.600" />
        <path d="M16 8L18.500 12H13.500ZM24 19L20 16.500V21.500Z" fill="#8a6d33" />
        {corner}
      </>
    ),
  },
  {
    name: "Annotation display",
    on: true,
    art: (
      <>
        <rect x="1" y="1" width="12" height="9" fill="#fff8dc" stroke="#77797b" strokeWidth="1.300" />
        <path d="M13 5H22L20 13" stroke="#444" strokeWidth="1.500" />
        <path d="M17 10L24 11L19 16Z" fill="#333" />
        <path d="M10 20C13 15 21 15 24 20C21 25 13 25 10 20Z" fill="#444" />
        <circle cx="17" cy="20" r="2.200" fill="#fff" />
        <circle cx="17" cy="20" r="1.100" fill="#222" />
      </>
    ),
  },
  {
    name: "Spin center",
    on: true,
    art: (
      <>
        <path d="M4 5L11 12H20M11 12L4 20" stroke="#444" strokeWidth="1.700" />
        <circle cx="4.500" cy="5" r="3.500" fill="#6fb76a" stroke="#4b8f47" />
        <circle cx="19.500" cy="12.500" r="3.500" fill="#e0696a" stroke="#b94a4b" />
        <circle cx="4.500" cy="20" r="3.500" fill="#3f8fc0" stroke="#2b6e98" />
      </>
    ),
  },
  {
    name: "Simulate",
    art: (
      <>
        <path d="M11 0H14L24 17V24H8L0 19Z" fill="#c4c6c7" />
        <path d="M11 0L0 19L6 21L13 7Z" fill="#9b9d9e" />
        <path d="M12.500 9L17 17H8Z" fill="#fafbfc" />
        <path d="M15 17L18 14L20 17H24V24H15Z" fill="#9fa1a2" />
      </>
    ),
  },
  { name: "Pause", art: <path d="M4 4H9V20H4ZM13 4H18V20H13Z" fill="#8e9092" /> },
  {
    name: "Stop",
    art: (
      <>
        <path d="M1 4H24V20H1L6 15V9Z" fill="#dcdedf" />
        <path d="M1 4H11C16 8 16 15 11 20H1C9 15 9 12 1 9Z" fill="url(#grey)" />
      </>
    ),
  },
];

function ViewToolbar() {
  return (
    <div role="toolbar" aria-label="View" className="absolute left-1/2 top-[7px] flex h-[46px] -translate-x-1/2 items-center border border-[#9b9fa1] bg-[#fafbfc] pl-[3px] pr-1">
      {viewTools.map((t) => (
        <button
          key={t.name}
          type="button"
          aria-label={t.name}
          aria-pressed={!!t.on}
          className={`mx-px flex h-[35px] w-9 items-center justify-center border ${t.on ? "border-[#a9acae] bg-[#dfe0e2]" : "border-transparent"}`}
        >
          <Svg s={25}>{t.art}</Svg>
        </button>
      ))}
    </div>
  );
}

/* ---------- model view ---------- */

function ModelView() {
  return (
    <svg className="absolute inset-0 h-full w-full" viewBox="413 165 1821 984" preserveAspectRatio="xMidYMid slice" role="img" aria-label="Hollow cylinder">
      <defs>
        <linearGradient id="side" gradientUnits="userSpaceOnUse" x1="778" y1="643" x2="1720" y2="360">
          <stop offset="0" stopColor="#7c8893" />
          <stop offset="0.06" stopColor="#818d99" />
          <stop offset="0.2" stopColor="#8995a2" />
          <stop offset="0.38" stopColor="#8894a1" />
          <stop offset="0.55" stopColor="#808b97" />
          <stop offset="0.7" stopColor="#747f8a" />
          <stop offset="0.78" stopColor="#6b747e" />
          <stop offset="0.86" stopColor="#5f6771" />
          <stop offset="0.92" stopColor="#565d67" />
          <stop offset="1" stopColor="#545b65" />
        </linearGradient>
        <linearGradient id="bore" gradientUnits="userSpaceOnUse" x1="1041" y1="564" x2="1456" y2="439">
          <stop offset="0" stopColor="#545b65" />
          <stop offset="0.08" stopColor="#575e68" />
          <stop offset="0.2" stopColor="#656d77" />
          <stop offset="0.35" stopColor="#737d88" />
          <stop offset="0.5" stopColor="#7d8894" />
          <stop offset="0.7" stopColor="#8793a0" />
          <stop offset="0.9" stopColor="#8793a0" />
          <stop offset="1" stopColor="#7c8893" />
        </linearGradient>
        <linearGradient id="bg" x1="0" y1="0" x2="0" y2="1">
          <stop offset="0" stopColor="#e8eaee" />
          <stop offset="1" stopColor="#e9e9ed" />
        </linearGradient>
      </defs>
      <rect x="413" y="165" width="1821" height="984" fill="url(#bg)" />

      <path d="M777 643L905 1070A464 200 -16.750 0 0 1848 786.500L1720 360Z" fill="url(#side)" />
      <path d="M905 1070A464 200 -16.750 0 0 1848 786.500" fill="none" stroke="#0c0e11" strokeWidth="1.500" />
      <path d="M777.500 643.300A464 200 -16.750 0 0 1719.500 359.700A464 200 -16.750 0 0 777.500 643.300Z" fill="#9fabbb" stroke="#0c0e11" strokeWidth="1.500" />
      <path d="M1041.200 564A208 90 -16.750 0 0 1455.800 439A208 90 -16.750 0 0 1041.200 564Z" fill="url(#bore)" stroke="#0c0e11" strokeWidth="1.500" />

      <g fill="none" strokeWidth="1.200">
        <path d="M833 707L636 822L857 906" stroke="#93969b" />
        <path d="M1697 482L1984 590.500L1819 688" stroke="#93969b" />
        <path d="M833 707L1049 580M1378 390L1408 370.500L1692 480" stroke="#8d98a4" />
        <path d="M1049 580L1281 445" stroke="#8c969f" />
        <path d="M1819 688L1597 817L1280 1003" stroke="#8e98a2" />
        <path d="M857 906L995 958" stroke="#8e99a5" />
        <path d="M971 388L959.500 385.500L963 402" stroke="#85888d" />
        <path d="M959.500 385.500L1132 450M959.500 385.500L1066 748M1381 545L1536 607" stroke="#8b96a3" />
        <path d="M1132 450L1310 517" stroke="#89939e" />
        <path d="M1536 607L1664.500 1044L1236 882" stroke="#8c96a0" />
        <path d="M1655 1040L1664.500 1044L1661 1033" stroke="#85888d" />
      </g>
      <g fill="none" strokeWidth="1.200" stroke="#7d5059">
        <path d="M1694 473L1633.500 269.500L861 721L987 1150" />
        <path d="M1694 473L1765.500 707.500L1597 806" opacity="0.65" />
        <path d="M1597 806L1009 1150" />
      </g>
      <path d="M1379 373L1245 825" stroke="#10b010" strokeWidth="1.600" strokeDasharray="14 6 7 6.500" />

      <g fontFamily="Liberation Sans, Arial, sans-serif" fontSize="23">
        <text x="1261" y="703" fill="#7c5a62">CS0</text>
        <path d="M1310 706.500L1333 715.500M1312 715.500L1290 728.500" stroke="#f03a3a" strokeWidth="1.300" />
        <path d="M1333 716L1318 713.500L1321 708.500Z" fill="#f03a3a" />
        <rect x="1288" y="726" width="5" height="5" fill="#f03a3a" />
        <path d="M1310 706.500L1278 725.500M1312 715.500L1320 740" stroke="#32f032" strokeWidth="1.300" />
        <path d="M1282 723L1289 715.500L1292 719Z" fill="#32f032" />
        <rect x="1317.500" y="737" width="4.500" height="5" fill="#32f032" />
        <path d="M1310 706.500L1312 715.500L1330 721" fill="none" stroke="#3df5fa" strokeWidth="1.300" />
        <path d="M1318 736L1314 728L1319 727Z" fill="#3df5fa" />
        <rect x="1327" y="718" width="6" height="6" fill="#3df5fa" />
        <text x="1336" y="736" fill="#f03a3a">X</text>
        <text x="1260" y="745" fill="#32f032">Y</text>
        <text x="1323" y="762" fill="#3df5fa">Z</text>
      </g>
    </svg>
  );
}

/* ---------- status bar ---------- */

function StatusBar() {
  return (
    <footer className="flex h-[93px] shrink-0 items-start border-t border-[#afb8b9] bg-[#f8f9f9] text-[#505255]">
      <div className="flex items-center pl-[9px] pt-[50px]">
        <button type="button" aria-label="Navigator" aria-pressed="true" className="flex h-9 w-8 items-center justify-center border border-[#abadae] bg-[#dfe0e1]">
          <Svg>
            <path d="M0.500 0.500H23.500V4.500H0.500Z" fill="#f6f6f6" stroke="#8c8e90" />
            <path d="M9 6H23.500V23H9Z" fill="#f4f4f5" stroke="#b9bbbc" />
            <rect x="1" y="6.500" width="8" height="16.500" fill="#e3f4fb" stroke="#2f7fa6" strokeWidth="1.600" />
            <path d="M11 20C14 15 21 15 24 20C21 25 14 25 11 20Z" fill="#3c3e40" />
            <circle cx="17.500" cy="20" r="2.300" fill="#fff" />
            <circle cx="17.500" cy="20" r="1.200" fill="#222" />
          </Svg>
        </button>
        <button type="button" aria-label="Browser" className="ml-2.5">
          <Svg>
            <path d="M4 20C-1 25 -1 20 5 12C11 4 19 -1 22 1" stroke="#6d6f71" strokeWidth="1.600" />
            <circle cx="12.500" cy="12" r="10" fill="url(#ball)" />
            <path d="M6 7L11 4L14 8L11 13L8 12ZM15 11L20 9L19 15L15 18L13 15Z" fill="#2a86b8" opacity="0.75" />
            <path d="M22 1C26 3 22 13 15 18.500C9 23 3 24 1.500 22.500" stroke="#5b5d60" strokeWidth="1.500" />
          </Svg>
        </button>
        <button type="button" aria-label="Full screen" className="ml-3.5">
          <Svg>
            <rect x="1" y="1" width="22" height="22" fill="url(#pane)" stroke="#2a7ca5" strokeWidth="1.700" />
          </Svg>
        </button>
        <span className="ml-[17px] h-9 w-px bg-[#b3b6b7]" />
      </div>
      <div className="flex-1 pl-1 pt-[11px] text-[15px] leading-6" aria-live="polite">
        <p className="flex items-center gap-[3px]">
          <Svg s={17}>
            <circle cx="8.500" cy="6.500" r="4" fill="#15597d" />
          </Svg>
          PRT0002 regeneration completed successfully.
        </p>
        <p className="flex items-center gap-[3px]">
          <Svg s={17}>
            <path d="M0.500 5H8V0.500L16.500 8.500L8 16.500V12H0.500Z" fill="#3aa3d0" stroke="#1c5a7c" />
            <path d="M2 7H9V5" stroke="#a8e0f5" strokeWidth="1.300" />
          </Svg>
          Confirm request to quit.
        </p>
      </div>
      <div className="flex items-center pr-[3px] pt-12 text-[17px]">
        <span className="h-[38px] w-px bg-[#b3b6b7]" />
        <span className="ml-1.5 h-[38px] w-px bg-[#b3b6b7]" />
        <div className="ml-[3px] flex h-9 border border-[#b9bcbd]">
          <button type="button" aria-label="Search" className="flex w-10 items-center justify-center">
            <Svg>
              <path d="M6 0H11V5H6ZM14 0H19V5H14Z" fill="#55585a" />
              <path d="M5 5H11L12 8L13 5H20L24 16V23H16V17H9V23H0V16Z" fill="#3c3e40" />
              <path d="M5 7H8V19H2V16Z" fill="#a5a8aa" />
              <path d="M17 7H20L22 16V19H17Z" fill="#7c7f81" />
              <path d="M0 20H8V24H0ZM16 20H24V24H16Z" fill="#222" />
            </Svg>
          </button>
          <button type="button" aria-label="Search options" className="flex w-5 items-center justify-center border-l border-[#b9bcbd]">
            <Caret />
          </button>
        </div>
        <span className="ml-1 h-[38px] w-px bg-[#b3b6b7]" />
        <span className="w-[149px] whitespace-nowrap pl-1.5">1 selected</span>
        <div className="relative flex h-[35px] w-[270px] border border-[#a5a9aa] bg-[#f9f9fa]">
          <select aria-label="Selection filter" className="h-full w-full appearance-none bg-transparent pl-2.5 outline-none">
            <option>Geometry</option>
          </select>
          <span className="pointer-events-none absolute inset-y-0 right-0 flex w-[23px] items-center justify-center border-l border-[#a5a9aa]">
            <Caret />
          </span>
        </div>
        <span className="ml-1.5 mt-[22px]">
          <Svg s={18}>
            <path d="M1 17L17 1M7 17L17 7M13 17L17 13" stroke="#c1c3c5" strokeWidth="2.600" />
          </Svg>
        </span>
      </div>
    </footer>
  );
}

export default function App() {
  return (
    <div className="flex h-screen w-full flex-col overflow-hidden border-l-[6px] border-[#a0a0a0] bg-[#f9fafc] font-['Open_Sans','Noto_Sans',sans-serif] text-[#505255]">
      <SharedGradients />
      <Ribbon />
      <div className="flex min-h-0 flex-1">
        <Panel />
        <main className="relative min-w-0 flex-1 overflow-hidden bg-[#e8eaee]">
          <ModelView />
          <ViewToolbar />
        </main>
      </div>
      <StatusBar />
    </div>
  );
}
